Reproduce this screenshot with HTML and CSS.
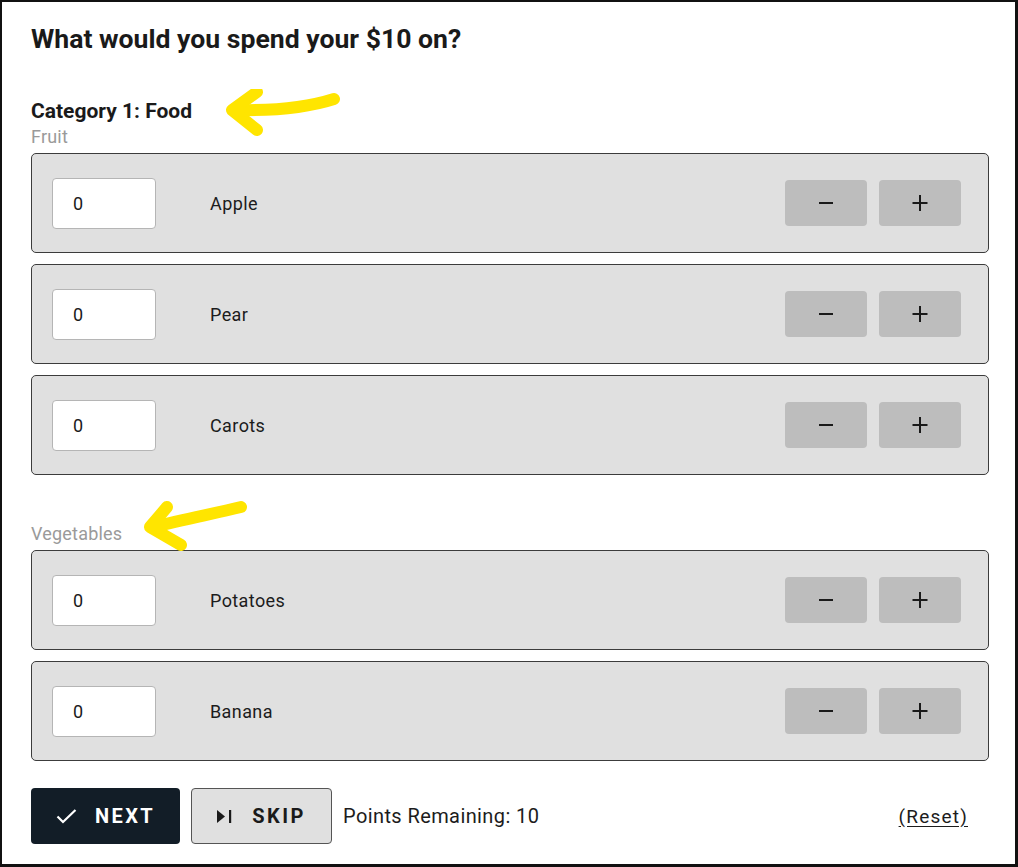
FILE: index.html
```html
<!DOCTYPE html>
<html>
<head>
<meta charset="utf-8">
<link rel="stylesheet" href="styles.css">
</head>
<body>
<div class="frame">
  <h1 class="title">What would you spend your $10 on?</h1>
  <h2 class="category">Category 1: Food</h2>

  <div class="group-label">Fruit</div>
  <div class="rows">
    <div class="row">
      <div class="qty">0</div>
      <div class="name">Apple</div>
      <div class="controls">
        <button class="step"><svg width="16" height="16" viewBox="0 0 16 16"><rect x="1" y="7" width="14" height="2" fill="#1a1a1a"/></svg></button>
        <button class="step"><svg width="16" height="16" viewBox="0 0 16 16"><rect x="0.5" y="7" width="15" height="2" fill="#1a1a1a"/><rect x="7" y="0" width="2" height="16" fill="#1a1a1a"/></svg></button>
      </div>
    </div>
    <div class="row">
      <div class="qty">0</div>
      <div class="name">Pear</div>
      <div class="controls">
        <button class="step"><svg width="16" height="16" viewBox="0 0 16 16"><rect x="1" y="7" width="14" height="2" fill="#1a1a1a"/></svg></button>
        <button class="step"><svg width="16" height="16" viewBox="0 0 16 16"><rect x="0.5" y="7" width="15" height="2" fill="#1a1a1a"/><rect x="7" y="0" width="2" height="16" fill="#1a1a1a"/></svg></button>
      </div>
    </div>
    <div class="row">
      <div class="qty">0</div>
      <div class="name">Carots</div>
      <div class="controls">
        <button class="step"><svg width="16" height="16" viewBox="0 0 16 16"><rect x="1" y="7" width="14" height="2" fill="#1a1a1a"/></svg></button>
        <button class="step"><svg width="16" height="16" viewBox="0 0 16 16"><rect x="0.5" y="7" width="15" height="2" fill="#1a1a1a"/><rect x="7" y="0" width="2" height="16" fill="#1a1a1a"/></svg></button>
      </div>
    </div>
  </div>

  <div class="group-label veg">Vegetables</div>
  <div class="rows">
    <div class="row">
      <div class="qty">0</div>
      <div class="name">Potatoes</div>
      <div class="controls">
        <button class="step"><svg width="16" height="16" viewBox="0 0 16 16"><rect x="1" y="7" width="14" height="2" fill="#1a1a1a"/></svg></button>
        <button class="step"><svg width="16" height="16" viewBox="0 0 16 16"><rect x="0.5" y="7" width="15" height="2" fill="#1a1a1a"/><rect x="7" y="0" width="2" height="16" fill="#1a1a1a"/></svg></button>
      </div>
    </div>
    <div class="row">
      <div class="qty">0</div>
      <div class="name">Banana</div>
      <div class="controls">
        <button class="step"><svg width="16" height="16" viewBox="0 0 16 16"><rect x="1" y="7" width="14" height="2" fill="#1a1a1a"/></svg></button>
        <button class="step"><svg width="16" height="16" viewBox="0 0 16 16"><rect x="0.5" y="7" width="15" height="2" fill="#1a1a1a"/><rect x="7" y="0" width="2" height="16" fill="#1a1a1a"/></svg></button>
      </div>
    </div>
  </div>

  <div class="footer">
    <button class="btn btn-next">
      <svg class="ico" width="21" height="15" viewBox="0 0 21 15"><path d="M1.5 7.5 L7 13 L19.5 1" fill="none" stroke="#fff" stroke-width="2.2"/></svg>
      <span>NEXT</span>
    </button>
    <button class="btn btn-skip">
      <svg class="ico" width="15" height="13" viewBox="0 0 15 13"><path d="M0 0 L8 6.5 L0 13 Z" fill="#1a1a1a"/><rect x="12" y="0" width="2.2" height="13" fill="#1a1a1a"/></svg>
      <span>SKIP</span>
    </button>
    <div class="points">Points Remaining: 10</div>
    <a class="reset" href="#">(Reset)</a>
  </div>

  <svg class="arrow arrow-1" width="130" height="60" viewBox="0 0 130 60">
    <path d="M110 10 C 85 18, 50 22, 10 21" fill="none" stroke="#ffe500" stroke-width="12" stroke-linecap="round" stroke-linejoin="round"/>
    <path d="M33 3 L 8 21 L 33 41" fill="none" stroke="#ffe500" stroke-width="12" stroke-linecap="round" stroke-linejoin="round"/>
  </svg>
  <svg class="arrow arrow-2" width="120" height="70" viewBox="0 0 120 70">
    <path d="M100 10 C 75 16, 45 22, 12 30" fill="none" stroke="#ffe500" stroke-width="12" stroke-linecap="round" stroke-linejoin="round"/>
    <path d="M26 10 L 9 30 L 40 48" fill="none" stroke="#ffe500" stroke-width="12" stroke-linecap="round" stroke-linejoin="round"/>
  </svg>
</div>
</body>
</html>
```
FILE: styles.css
```css
html, body {
  margin: 0;
  padding: 0;
  background: #fff;
}
body {
  font-family: Roboto, "Liberation Sans", Arial, sans-serif;
  color: #1c1c1c;
}
.frame {
  position: relative;
  box-sizing: border-box;
  width: 1018px;
  height: 867px;
  border: 2px solid #111;
  border-right-width: 3px;
  border-bottom-width: 3px;
  padding: 22px 26px 0 29px;
}
.title {
  margin: 0;
  font-size: 26.6px;
  line-height: 30px;
  font-weight: 700;
  color: #1a1a1a;
}
.category {
  margin: 45px 0 0;
  font-size: 21px;
  line-height: 24px;
  font-weight: 700;
  color: #1a1a1a;
}
.group-label {
  margin-top: 3px;
  font-size: 18px;
  line-height: 22px;
  letter-spacing: 0.2px;
  color: #9a9a9a;
}
.group-label.veg {
  margin-top: 48px;
}
.rows {
  margin-top: 5px;
  display: flex;
  flex-direction: column;
  gap: 11px;
}
.row {
  box-sizing: border-box;
  height: 100px;
  background: #e0e0e0;
  border: 1px solid #3c3c3c;
  border-radius: 5px;
  display: flex;
  align-items: center;
  padding: 0 27px 0 20px;
}
.qty {
  box-sizing: border-box;
  width: 104px;
  height: 51px;
  background: #fff;
  border: 1px solid #b5b5b5;
  border-radius: 4px;
  padding-left: 20px;
  display: flex;
  align-items: center;
  font-size: 18px;
  color: #1a1a1a;
}
.name {
  margin-left: 54px;
  font-size: 18px;
  letter-spacing: 0.4px;
  color: #1c1c1c;
  flex: 1;
}
.controls {
  display: flex;
  gap: 12px;
}
.step {
  width: 82px;
  height: 46px;
  border: none;
  border-radius: 4px;
  background: #bdbdbd;
  padding: 0;
  display: flex;
  align-items: center;
  justify-content: center;
}
.step svg {
  display: block;
}
.footer {
  margin-top: 27px;
  display: flex;
  align-items: center;
}
.btn {
  box-sizing: border-box;
  height: 56px;
  border-radius: 4px;
  display: flex;
  align-items: center;
  justify-content: center;
  font-family: Roboto, "Liberation Sans", Arial, sans-serif;
  font-size: 20px;
  font-weight: 700;
  letter-spacing: 2.4px;
  padding: 0;
}
.btn .ico {
  display: block;
}
.btn-next {
  width: 149px;
  background: #121d27;
  color: #fff;
  border: none;
  gap: 18px;
}
.btn-skip {
  margin-left: 11px;
  width: 141px;
  background: #e0e0e0;
  color: #1a1a1a;
  border: 1px solid #555;
  gap: 20px;
}
.points {
  margin-left: 11px;
  font-size: 20px;
  letter-spacing: 0.4px;
  color: #1c1c1c;
}
.reset {
  margin-left: auto;
  margin-right: 21px;
  font-size: 19px;
  letter-spacing: 1.2px;
  color: #1c1c1c;
  text-decoration: underline;
  text-underline-offset: 3px;
}
.arrow {
  position: absolute;
}
.arrow-1 {
  left: 222px;
  top: 87px;
}
.arrow-2 {
  left: 139px;
  top: 495px;
}
```
